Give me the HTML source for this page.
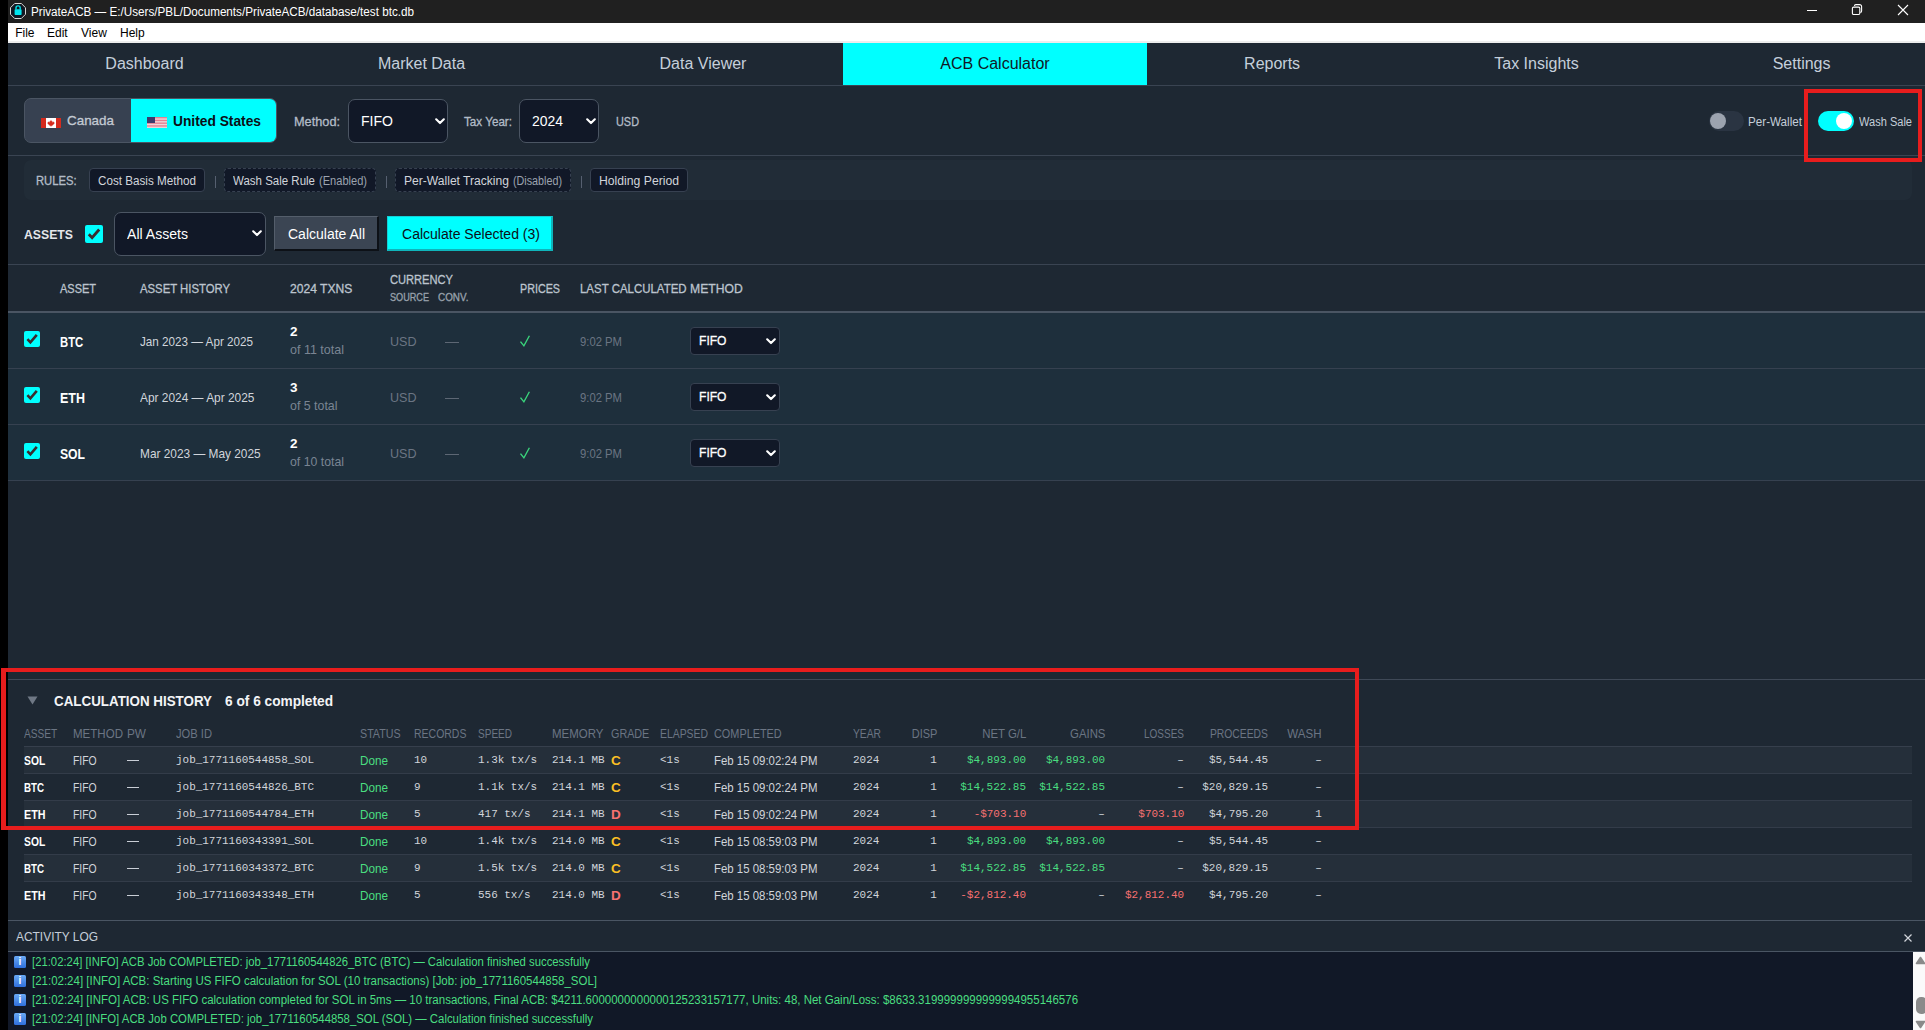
<!DOCTYPE html><html><head><meta charset="utf-8"><title>PrivateACB</title><style>
*{box-sizing:border-box;margin:0;padding:0}
html,body{width:1925px;height:1030px;overflow:hidden;background:#000;font-family:"Liberation Sans",sans-serif}
.a{position:absolute;white-space:nowrap}
.chip{position:absolute;height:24px;background:#111827;border:1px solid #374151;border-radius:4px}
.chip.d{border-style:dashed}
</style></head><body>
<div class="a" style="left:8px;top:0px;width:1917px;height:23px;background:#202020"></div>
<svg class="a" style="left:10px;top:3px" width="16" height="16" viewBox="0 0 16 16"><polygon points="4.7,0.5 11.3,0.5 15.5,4.7 15.5,11.3 11.3,15.5 4.7,15.5 0.5,11.3 0.5,4.7" fill="#0f1722" stroke="#d8d8d8" stroke-width="1"/><rect x="4.6" y="6.2" width="7" height="5.8" rx="0.8" fill="#00e5ee"/><path d="M6 6.5V5a2.1 2.1 0 0 1 4.2 0V6.5" fill="none" stroke="#00e5ee" stroke-width="1.4"/></svg>
<span class="a" style="left:31px;top:1.50px;line-height:20px;font-family:'Liberation Sans',sans-serif;font-size:12px;font-weight:normal;color:#fff;transform:scaleX(0.9733);transform-origin:left center;">PrivateACB — E:/Users/PBL/Documents/PrivateACB/database/test btc.db</span>
<div class="a" style="left:1807px;top:10px;width:10px;height:1px;background:#fff"></div>
<svg class="a" style="left:1850px;top:3px" width="14" height="14" viewBox="0 0 14 14"><rect x="2.4" y="4.1" width="7.4" height="7.4" rx="1.2" fill="none" stroke="#fff" stroke-width="1.1"/><path d="M4.5 2.9a1.3 1.3 0 0 1 1.3-1.3H9.6A2 2 0 0 1 11.6 3.6V8.1A1.3 1.3 0 0 1 10.3 9.4" fill="none" stroke="#fff" stroke-width="1.1"/></svg>
<svg class="a" style="left:1897px;top:4px" width="12" height="12" viewBox="0 0 12 12"><path d="M1 1L11 11M11 1L1 11" stroke="#fff" stroke-width="1.1"/></svg>
<div class="a" style="left:8px;top:23px;width:1917px;height:20px;background:#fff"></div>
<div class="a" style="left:8px;top:41px;width:1917px;height:2px;background:#ededed"></div>
<span class="a" style="left:15.2px;top:22.60px;line-height:20px;font-family:'Liberation Sans',sans-serif;font-size:12px;font-weight:normal;color:#000;">File</span>
<span class="a" style="left:47px;top:22.60px;line-height:20px;font-family:'Liberation Sans',sans-serif;font-size:12px;font-weight:normal;color:#000;">Edit</span>
<span class="a" style="left:81px;top:22.60px;line-height:20px;font-family:'Liberation Sans',sans-serif;font-size:12px;font-weight:normal;color:#000;">View</span>
<span class="a" style="left:120px;top:22.60px;line-height:20px;font-family:'Liberation Sans',sans-serif;font-size:12px;font-weight:normal;color:#000;">Help</span>
<div class="a" style="left:8px;top:43px;width:1917px;height:987px;background:#1e2833"></div>
<div class="a" style="left:843px;top:43px;width:304px;height:42px;background:#00ffff"></div>
<span class="a" style="left:-155.5px;width:600px;top:43px;line-height:41px;text-align:center;font-size:16px;color:#c5cfdb">Dashboard</span>
<span class="a" style="left:121.5px;width:600px;top:43px;line-height:41px;text-align:center;font-size:16px;color:#c5cfdb">Market Data</span>
<span class="a" style="left:403px;width:600px;top:43px;line-height:41px;text-align:center;font-size:16px;color:#c5cfdb">Data Viewer</span>
<span class="a" style="left:695px;width:600px;top:43px;line-height:41px;text-align:center;font-size:16px;color:#101826">ACB Calculator</span>
<span class="a" style="left:972.0999999999999px;width:600px;top:43px;line-height:41px;text-align:center;font-size:16px;color:#c5cfdb">Reports</span>
<span class="a" style="left:1236.5px;width:600px;top:43px;line-height:41px;text-align:center;font-size:16px;color:#c5cfdb">Tax Insights</span>
<span class="a" style="left:1501.6px;width:600px;top:43px;line-height:41px;text-align:center;font-size:16px;color:#c5cfdb">Settings</span>
<div class="a" style="left:8px;top:85px;width:1917px;height:1px;background:#3a4452"></div>
<div class="a" style="left:24px;top:98px;width:253px;height:45px;border:1px solid #4b5563;border-radius:7px;background:#374151;overflow:hidden"></div>
<div class="a" style="left:131px;top:99px;width:145px;height:43px;background:#00ffff;border-radius:0 6px 6px 0"></div>
<svg class="a" style="left:41px;top:118px" width="20" height="10" viewBox="0 0 20 10"><rect width="20" height="10" fill="#fff"/><rect width="5" height="10" fill="#d52b1e"/><rect x="15" width="5" height="10" fill="#d52b1e"/><path d="M10 1.8L10.7 3.2 11.5 2.9 11.2 4.6 12.6 3.6 13 4.4 13.6 4.3 13.2 5.4 13.6 5.7 11.3 7.3 11.5 7.9 10.2 7.7V9H9.8V7.7L8.5 7.9 8.7 7.3 6.4 5.7 6.8 5.4 6.4 4.3 7 4.4 7.4 3.6 8.8 4.6 8.5 2.9 9.3 3.2Z" fill="#d52b1e"/></svg>
<span class="a" style="left:67px;top:111.10px;line-height:20px;font-family:'Liberation Sans',sans-serif;font-size:13.5px;font-weight:normal;color:#c3cad3;transform:scaleX(0.9938);transform-origin:left center;-webkit-text-stroke:0.3px #c3cad3;">Canada</span>
<svg class="a" style="left:147px;top:117px" width="20" height="11" viewBox="0 0 20 11"><rect width="20" height="11" fill="#f2f2f2"/><rect y="0.00" width="20" height="0.79" fill="#e0637a"/><rect y="1.57" width="20" height="0.79" fill="#e0637a"/><rect y="3.14" width="20" height="0.79" fill="#e0637a"/><rect y="4.71" width="20" height="0.79" fill="#e0637a"/><rect y="6.29" width="20" height="0.79" fill="#e0637a"/><rect y="7.86" width="20" height="0.79" fill="#e0637a"/><rect y="9.43" width="20" height="0.79" fill="#e0637a"/><rect width="8" height="6" fill="#3c3b6e"/></svg>
<span class="a" style="left:173px;top:111.10px;line-height:20px;font-family:'Liberation Sans',sans-serif;font-size:14px;font-weight:bold;color:#0b0f17;transform:scaleX(0.9836);transform-origin:left center;">United States</span>
<span class="a" style="left:294px;top:112.00px;line-height:20px;font-family:'Liberation Sans',sans-serif;font-size:12.5px;font-weight:normal;color:#b3bcc7;transform:scaleX(1.0184);transform-origin:left center;-webkit-text-stroke:0.3px #b3bcc7;">Method:</span>
<div class="a" style="left:348px;top:99px;width:100px;height:44px;background:#111827;border:1px solid #4b5563;border-radius:7px"></div>
<span class="a" style="left:361px;top:111.30px;line-height:20px;font-family:'Liberation Sans',sans-serif;font-size:14px;font-weight:normal;color:#fff;transform:scaleX(1.0037);transform-origin:left center;">FIFO</span>
<svg class="a" style="left:434.5px;top:117.5px" width="10" height="7" viewBox="0 0 10 7"><path d="M1.2 1.3L5 5.1 8.8 1.3" fill="none" stroke="#fff" stroke-width="2.1" stroke-linecap="round" stroke-linejoin="round"/></svg>
<span class="a" style="left:464px;top:112.00px;line-height:20px;font-family:'Liberation Sans',sans-serif;font-size:12.5px;font-weight:normal;color:#b3bcc7;transform:scaleX(0.9333);transform-origin:left center;-webkit-text-stroke:0.3px #b3bcc7;">Tax Year:</span>
<div class="a" style="left:519px;top:99px;width:80px;height:44px;background:#111827;border:1px solid #4b5563;border-radius:7px"></div>
<span class="a" style="left:532px;top:111.30px;line-height:20px;font-family:'Liberation Sans',sans-serif;font-size:14px;font-weight:normal;color:#fff;transform:scaleX(0.9953);transform-origin:left center;">2024</span>
<svg class="a" style="left:585.5px;top:117.5px" width="10" height="7" viewBox="0 0 10 7"><path d="M1.2 1.3L5 5.1 8.8 1.3" fill="none" stroke="#fff" stroke-width="2.1" stroke-linecap="round" stroke-linejoin="round"/></svg>
<span class="a" style="left:615.5px;top:112.00px;line-height:20px;font-family:'Liberation Sans',sans-serif;font-size:12.5px;font-weight:normal;color:#b3bcc7;transform:scaleX(0.8715);transform-origin:left center;-webkit-text-stroke:0.3px #b3bcc7;">USD</span>
<div class="a" style="left:1709px;top:111px;width:35px;height:20px;background:#2a3442;border-radius:10px"></div>
<div class="a" style="left:1710px;top:113px;width:16px;height:16px;background:#9ca3af;border-radius:50%"></div>
<span class="a" style="left:1748px;top:112.20px;line-height:20px;font-family:'Liberation Sans',sans-serif;font-size:12.5px;font-weight:normal;color:#c5ced9;transform:scaleX(0.9329);transform-origin:left center;">Per-Wallet</span>
<div class="a" style="left:1818px;top:111px;width:36px;height:20px;background:#00ffff;border-radius:10px"></div>
<div class="a" style="left:1836px;top:113px;width:16px;height:16px;background:#fff;border-radius:50%"></div>
<span class="a" style="left:1859px;top:112.20px;line-height:20px;font-family:'Liberation Sans',sans-serif;font-size:12.5px;font-weight:normal;color:#c5ced9;transform:scaleX(0.8836);transform-origin:left center;">Wash Sale</span>
<div class="a" style="left:8px;top:155px;width:1917px;height:1px;background:#3a4452"></div>
<div class="a" style="left:24px;top:160px;width:1888px;height:40px;background:#212c37;border-radius:7px"></div>
<span class="a" style="left:36px;top:171.00px;line-height:20px;font-family:'Liberation Sans',sans-serif;font-size:12px;font-weight:normal;color:#b3bcc7;transform:scaleX(0.9366);transform-origin:left center;-webkit-text-stroke:0.3px #b3bcc7;">RULES:</span>
<div class="chip" style="left:89px;top:168px;width:116px"></div>
<div class="chip d" style="left:224px;top:168px;width:152px"></div>
<div class="chip d" style="left:395px;top:168px;width:176px"></div>
<div class="chip" style="left:590px;top:168px;width:98px"></div>
<span class="a" style="left:98px;top:171.00px;line-height:20px;font-family:'Liberation Sans',sans-serif;font-size:12.5px;font-weight:normal;color:#d1d5db;transform:scaleX(0.9341);transform-origin:left center;">Cost Basis Method</span>
<span class="a" style="left:233px;top:171.00px;line-height:20px;font-family:'Liberation Sans',sans-serif;font-size:12.5px;font-weight:normal;color:#d1d5db;transform:scaleX(0.9197);transform-origin:left center;">Wash Sale Rule</span>
<span class="a" style="left:319px;top:171.00px;line-height:20px;font-family:'Liberation Sans',sans-serif;font-size:12.5px;font-weight:normal;color:#9ca3af;transform:scaleX(0.8856);transform-origin:left center;">(Enabled)</span>
<span class="a" style="left:404px;top:171.00px;line-height:20px;font-family:'Liberation Sans',sans-serif;font-size:12.5px;font-weight:normal;color:#d1d5db;transform:scaleX(0.9669);transform-origin:left center;">Per-Wallet Tracking</span>
<span class="a" style="left:513px;top:171.00px;line-height:20px;font-family:'Liberation Sans',sans-serif;font-size:12.5px;font-weight:normal;color:#9ca3af;transform:scaleX(0.8602);transform-origin:left center;">(Disabled)</span>
<span class="a" style="left:599px;top:171.00px;line-height:20px;font-family:'Liberation Sans',sans-serif;font-size:12.5px;font-weight:normal;color:#d1d5db;transform:scaleX(0.9756);transform-origin:left center;">Holding Period</span>
<div class="a" style="left:214.5px;top:176px;width:1.0px;height:12px;background:#566070"></div>
<div class="a" style="left:385.5px;top:176px;width:1.0px;height:12px;background:#566070"></div>
<div class="a" style="left:580.5px;top:176px;width:1.0px;height:12px;background:#566070"></div>
<span class="a" style="left:24px;top:225.00px;line-height:20px;font-family:'Liberation Sans',sans-serif;font-size:13.5px;font-weight:bold;color:#e5e7eb;transform:scaleX(0.9071);transform-origin:left center;">ASSETS</span>
<div class="a" style="left:85px;top:225px;width:18px;height:18px;background:#00ffff;border-radius:2px"></div>
<svg class="a" style="left:85px;top:225px" width="18" height="18" viewBox="0 0 18 18"><path d="M3.8 9.2L7.1 12.7 14.2 4.5" fill="none" stroke="#3a2c2e" stroke-width="2.8"/></svg>
<div class="a" style="left:114px;top:212px;width:152px;height:44px;background:#111827;border:1px solid #4b5563;border-radius:7px"></div>
<span class="a" style="left:127px;top:224.00px;line-height:20px;font-family:'Liberation Sans',sans-serif;font-size:14px;font-weight:normal;color:#fff;transform:scaleX(1.0051);transform-origin:left center;">All Assets</span>
<svg class="a" style="left:251.5px;top:230.3px" width="10" height="7" viewBox="0 0 10 7"><path d="M1.2 1.3L5 5.1 8.8 1.3" fill="none" stroke="#fff" stroke-width="2.1" stroke-linecap="round" stroke-linejoin="round"/></svg>
<div class="a" style="left:274px;top:216px;width:105px;height:35px;background:#3b4553;border:1px solid #545e6b;border-right:2px solid #0d1117;border-bottom:2px solid #0d1117"></div>
<span class="a" style="left:288px;top:224.00px;line-height:20px;font-family:'Liberation Sans',sans-serif;font-size:14px;font-weight:normal;color:#fff;transform:scaleX(0.9994);transform-origin:left center;">Calculate All</span>
<div class="a" style="left:387px;top:216px;width:166px;height:35px;background:#00ffff;border:1px solid #14d0d6;border-right:2px solid #0fb5bb;border-bottom:2px solid #0fb5bb"></div>
<span class="a" style="left:402px;top:224.00px;line-height:20px;font-family:'Liberation Sans',sans-serif;font-size:14px;font-weight:normal;color:#0b0f17;transform:scaleX(1.0019);transform-origin:left center;">Calculate Selected (3)</span>
<div class="a" style="left:8px;top:264px;width:1917px;height:1px;background:#3a4452"></div>
<span class="a" style="left:60px;top:278.80px;line-height:20px;font-family:'Liberation Sans',sans-serif;font-size:12.5px;font-weight:normal;color:#bcc4ce;transform:scaleX(0.8783);transform-origin:left center;-webkit-text-stroke:0.3px #bcc4ce;">ASSET</span>
<span class="a" style="left:140px;top:278.80px;line-height:20px;font-family:'Liberation Sans',sans-serif;font-size:12.5px;font-weight:normal;color:#bcc4ce;transform:scaleX(0.9059);transform-origin:left center;-webkit-text-stroke:0.3px #bcc4ce;">ASSET HISTORY</span>
<span class="a" style="left:290px;top:278.80px;line-height:20px;font-family:'Liberation Sans',sans-serif;font-size:12.5px;font-weight:normal;color:#bcc4ce;transform:scaleX(0.9690);transform-origin:left center;-webkit-text-stroke:0.3px #bcc4ce;">2024 TXNS</span>
<span class="a" style="left:390px;top:269.80px;line-height:20px;font-family:'Liberation Sans',sans-serif;font-size:12.5px;font-weight:normal;color:#bcc4ce;transform:scaleX(0.8893);transform-origin:left center;-webkit-text-stroke:0.3px #bcc4ce;">CURRENCY</span>
<span class="a" style="left:390px;top:287.60px;line-height:20px;font-family:'Liberation Sans',sans-serif;font-size:10px;font-weight:normal;color:#98a1ac;transform:scaleX(0.9115);transform-origin:left center;-webkit-text-stroke:0.3px #98a1ac;">SOURCE</span>
<span class="a" style="left:438px;top:287.60px;line-height:20px;font-family:'Liberation Sans',sans-serif;font-size:10px;font-weight:normal;color:#98a1ac;transform:scaleX(0.9885);transform-origin:left center;-webkit-text-stroke:0.3px #98a1ac;">CONV.</span>
<span class="a" style="left:520px;top:278.80px;line-height:20px;font-family:'Liberation Sans',sans-serif;font-size:12.5px;font-weight:normal;color:#bcc4ce;transform:scaleX(0.8595);transform-origin:left center;-webkit-text-stroke:0.3px #bcc4ce;">PRICES</span>
<span class="a" style="left:580px;top:278.80px;line-height:20px;font-family:'Liberation Sans',sans-serif;font-size:12.5px;font-weight:normal;color:#bcc4ce;transform:scaleX(0.9170);transform-origin:left center;-webkit-text-stroke:0.3px #bcc4ce;">LAST CALCULATED</span>
<span class="a" style="left:690px;top:278.80px;line-height:20px;font-family:'Liberation Sans',sans-serif;font-size:12.5px;font-weight:normal;color:#bcc4ce;transform:scaleX(0.9730);transform-origin:left center;-webkit-text-stroke:0.3px #bcc4ce;">METHOD</span>
<div class="a" style="left:8px;top:311px;width:1917px;height:2px;background:#4a5563"></div>
<div class="a" style="left:8px;top:313px;width:1917px;height:55px;background:#1e2f3c"></div>
<div class="a" style="left:8px;top:368px;width:1917px;height:1px;background:#364150"></div>
<div class="a" style="left:24px;top:331px;width:16px;height:16px;background:#00ffff;border-radius:2px"></div>
<svg class="a" style="left:24px;top:331px" width="16" height="16" viewBox="0 0 16 16"><path d="M3.4 8.2L6.4 11.4 12.8 3.9" fill="none" stroke="#3a2c2e" stroke-width="2.6"/></svg>
<span class="a" style="left:60px;top:331.70px;line-height:20px;font-family:'Liberation Sans',sans-serif;font-size:14px;font-weight:bold;color:#fff;transform:scaleX(0.8063);transform-origin:left center;">BTC</span>
<span class="a" style="left:140px;top:332.00px;line-height:20px;font-family:'Liberation Sans',sans-serif;font-size:13px;font-weight:normal;color:#d1d5db;transform:scaleX(0.8985);transform-origin:left center;">Jan 2023 — Apr 2025</span>
<span class="a" style="left:290px;top:321.70px;line-height:20px;font-family:'Liberation Sans',sans-serif;font-size:13.5px;font-weight:bold;color:#fff;">2</span>
<span class="a" style="left:290px;top:339.60px;line-height:20px;font-family:'Liberation Sans',sans-serif;font-size:13px;font-weight:normal;color:#7a8593;transform:scaleX(0.9620);transform-origin:left center;">of 11 total</span>
<span class="a" style="left:390px;top:332.00px;line-height:20px;font-family:'Liberation Sans',sans-serif;font-size:13.5px;font-weight:normal;color:#6b7583;transform:scaleX(0.9297);transform-origin:left center;">USD</span>
<div class="a" style="left:445px;top:342px;width:14px;height:1px;background:#5d6774"></div>
<svg class="a" style="left:519px;top:335px" width="12" height="13" viewBox="0 0 12 13"><path d="M1.5 6.6L4.9 10.9 10.4 0.8" fill="none" stroke="#3ad57c" stroke-width="1.35"/></svg>
<span class="a" style="left:580px;top:332.00px;line-height:20px;font-family:'Liberation Sans',sans-serif;font-size:13px;font-weight:normal;color:#6b7583;transform:scaleX(0.8675);transform-origin:left center;">9:02 PM</span>
<div class="a" style="left:690px;top:327px;width:90px;height:28px;background:#111827;border:1px solid #374151;border-radius:4px"></div>
<span class="a" style="left:699px;top:330.50px;line-height:20px;font-family:'Liberation Sans',sans-serif;font-size:13px;font-weight:normal;color:#fff;transform:scaleX(0.9289);transform-origin:left center;-webkit-text-stroke:0.3px #fff;">FIFO</span>
<svg class="a" style="left:766px;top:338px" width="10" height="7" viewBox="0 0 10 7"><path d="M1.2 1.3L5 5.1 8.8 1.3" fill="none" stroke="#fff" stroke-width="2.1" stroke-linecap="round" stroke-linejoin="round"/></svg>
<div class="a" style="left:8px;top:369px;width:1917px;height:55px;background:#1e2f3c"></div>
<div class="a" style="left:8px;top:424px;width:1917px;height:1px;background:#364150"></div>
<div class="a" style="left:24px;top:387px;width:16px;height:16px;background:#00ffff;border-radius:2px"></div>
<svg class="a" style="left:24px;top:387px" width="16" height="16" viewBox="0 0 16 16"><path d="M3.4 8.2L6.4 11.4 12.8 3.9" fill="none" stroke="#3a2c2e" stroke-width="2.6"/></svg>
<span class="a" style="left:60px;top:387.70px;line-height:20px;font-family:'Liberation Sans',sans-serif;font-size:14px;font-weight:bold;color:#fff;transform:scaleX(0.8928);transform-origin:left center;">ETH</span>
<span class="a" style="left:140px;top:388.00px;line-height:20px;font-family:'Liberation Sans',sans-serif;font-size:13px;font-weight:normal;color:#d1d5db;transform:scaleX(0.9150);transform-origin:left center;">Apr 2024 — Apr 2025</span>
<span class="a" style="left:290px;top:377.70px;line-height:20px;font-family:'Liberation Sans',sans-serif;font-size:13.5px;font-weight:bold;color:#fff;">3</span>
<span class="a" style="left:290px;top:395.60px;line-height:20px;font-family:'Liberation Sans',sans-serif;font-size:13px;font-weight:normal;color:#7a8593;transform:scaleX(0.9525);transform-origin:left center;">of 5 total</span>
<span class="a" style="left:390px;top:388.00px;line-height:20px;font-family:'Liberation Sans',sans-serif;font-size:13.5px;font-weight:normal;color:#6b7583;transform:scaleX(0.9297);transform-origin:left center;">USD</span>
<div class="a" style="left:445px;top:398px;width:14px;height:1px;background:#5d6774"></div>
<svg class="a" style="left:519px;top:391px" width="12" height="13" viewBox="0 0 12 13"><path d="M1.5 6.6L4.9 10.9 10.4 0.8" fill="none" stroke="#3ad57c" stroke-width="1.35"/></svg>
<span class="a" style="left:580px;top:388.00px;line-height:20px;font-family:'Liberation Sans',sans-serif;font-size:13px;font-weight:normal;color:#6b7583;transform:scaleX(0.8675);transform-origin:left center;">9:02 PM</span>
<div class="a" style="left:690px;top:383px;width:90px;height:28px;background:#111827;border:1px solid #374151;border-radius:4px"></div>
<span class="a" style="left:699px;top:386.50px;line-height:20px;font-family:'Liberation Sans',sans-serif;font-size:13px;font-weight:normal;color:#fff;transform:scaleX(0.9289);transform-origin:left center;-webkit-text-stroke:0.3px #fff;">FIFO</span>
<svg class="a" style="left:766px;top:394px" width="10" height="7" viewBox="0 0 10 7"><path d="M1.2 1.3L5 5.1 8.8 1.3" fill="none" stroke="#fff" stroke-width="2.1" stroke-linecap="round" stroke-linejoin="round"/></svg>
<div class="a" style="left:8px;top:425px;width:1917px;height:55px;background:#1e2f3c"></div>
<div class="a" style="left:8px;top:480px;width:1917px;height:1px;background:#364150"></div>
<div class="a" style="left:24px;top:443px;width:16px;height:16px;background:#00ffff;border-radius:2px"></div>
<svg class="a" style="left:24px;top:443px" width="16" height="16" viewBox="0 0 16 16"><path d="M3.4 8.2L6.4 11.4 12.8 3.9" fill="none" stroke="#3a2c2e" stroke-width="2.6"/></svg>
<span class="a" style="left:60px;top:443.70px;line-height:20px;font-family:'Liberation Sans',sans-serif;font-size:14px;font-weight:bold;color:#fff;transform:scaleX(0.8687);transform-origin:left center;">SOL</span>
<span class="a" style="left:140px;top:444.00px;line-height:20px;font-family:'Liberation Sans',sans-serif;font-size:13px;font-weight:normal;color:#d1d5db;transform:scaleX(0.9120);transform-origin:left center;">Mar 2023 — May 2025</span>
<span class="a" style="left:290px;top:433.70px;line-height:20px;font-family:'Liberation Sans',sans-serif;font-size:13.5px;font-weight:bold;color:#fff;">2</span>
<span class="a" style="left:290px;top:451.60px;line-height:20px;font-family:'Liberation Sans',sans-serif;font-size:13px;font-weight:normal;color:#7a8593;transform:scaleX(0.9458);transform-origin:left center;">of 10 total</span>
<span class="a" style="left:390px;top:444.00px;line-height:20px;font-family:'Liberation Sans',sans-serif;font-size:13.5px;font-weight:normal;color:#6b7583;transform:scaleX(0.9297);transform-origin:left center;">USD</span>
<div class="a" style="left:445px;top:454px;width:14px;height:1px;background:#5d6774"></div>
<svg class="a" style="left:519px;top:447px" width="12" height="13" viewBox="0 0 12 13"><path d="M1.5 6.6L4.9 10.9 10.4 0.8" fill="none" stroke="#3ad57c" stroke-width="1.35"/></svg>
<span class="a" style="left:580px;top:444.00px;line-height:20px;font-family:'Liberation Sans',sans-serif;font-size:13px;font-weight:normal;color:#6b7583;transform:scaleX(0.8675);transform-origin:left center;">9:02 PM</span>
<div class="a" style="left:690px;top:439px;width:90px;height:28px;background:#111827;border:1px solid #374151;border-radius:4px"></div>
<span class="a" style="left:699px;top:442.50px;line-height:20px;font-family:'Liberation Sans',sans-serif;font-size:13px;font-weight:normal;color:#fff;transform:scaleX(0.9289);transform-origin:left center;-webkit-text-stroke:0.3px #fff;">FIFO</span>
<svg class="a" style="left:766px;top:450px" width="10" height="7" viewBox="0 0 10 7"><path d="M1.2 1.3L5 5.1 8.8 1.3" fill="none" stroke="#fff" stroke-width="2.1" stroke-linecap="round" stroke-linejoin="round"/></svg>
<div class="a" style="left:8px;top:679px;width:1917px;height:1px;background:#3f4957"></div>
<svg class="a" style="left:27px;top:696px" width="11" height="9" viewBox="0 0 11 9"><path d="M0.5 0.5H10.5L5.5 8.5Z" fill="#6f7885"/></svg>
<span class="a" style="left:54px;top:691.30px;line-height:20px;font-family:'Liberation Sans',sans-serif;font-size:14px;font-weight:bold;color:#f3f4f6;transform:scaleX(0.9552);transform-origin:left center;">CALCULATION HISTORY</span>
<span class="a" style="left:225px;top:691.30px;line-height:20px;font-family:'Liberation Sans',sans-serif;font-size:14px;font-weight:bold;color:#f3f4f6;transform:scaleX(0.9776);transform-origin:left center;">6 of 6 completed</span>
<span class="a" style="left:24.3px;top:723.50px;line-height:20px;font-family:'Liberation Sans',sans-serif;font-size:13px;font-weight:normal;color:#6b7583;transform:scaleX(0.7812);transform-origin:left center;">ASSET</span>
<span class="a" style="left:73.3px;top:723.50px;line-height:20px;font-family:'Liberation Sans',sans-serif;font-size:13px;font-weight:normal;color:#6b7583;transform:scaleX(0.8876);transform-origin:left center;">METHOD</span>
<span class="a" style="left:127px;top:723.50px;line-height:20px;font-family:'Liberation Sans',sans-serif;font-size:13px;font-weight:normal;color:#6b7583;transform:scaleX(0.9073);transform-origin:left center;">PW</span>
<span class="a" style="left:176px;top:723.50px;line-height:20px;font-family:'Liberation Sans',sans-serif;font-size:13px;font-weight:normal;color:#6b7583;transform:scaleX(0.8593);transform-origin:left center;">JOB ID</span>
<span class="a" style="left:360.2px;top:723.50px;line-height:20px;font-family:'Liberation Sans',sans-serif;font-size:13px;font-weight:normal;color:#6b7583;transform:scaleX(0.8226);transform-origin:left center;">STATUS</span>
<span class="a" style="left:414.4px;top:723.50px;line-height:20px;font-family:'Liberation Sans',sans-serif;font-size:13px;font-weight:normal;color:#6b7583;transform:scaleX(0.8061);transform-origin:left center;">RECORDS</span>
<span class="a" style="left:478px;top:723.50px;line-height:20px;font-family:'Liberation Sans',sans-serif;font-size:13px;font-weight:normal;color:#6b7583;transform:scaleX(0.7714);transform-origin:left center;">SPEED</span>
<span class="a" style="left:552.3px;top:723.50px;line-height:20px;font-family:'Liberation Sans',sans-serif;font-size:13px;font-weight:normal;color:#6b7583;transform:scaleX(0.8821);transform-origin:left center;">MEMORY</span>
<span class="a" style="left:611.2px;top:723.50px;line-height:20px;font-family:'Liberation Sans',sans-serif;font-size:13px;font-weight:normal;color:#6b7583;transform:scaleX(0.8284);transform-origin:left center;">GRADE</span>
<span class="a" style="left:660.2px;top:723.50px;line-height:20px;font-family:'Liberation Sans',sans-serif;font-size:13px;font-weight:normal;color:#6b7583;transform:scaleX(0.8003);transform-origin:left center;">ELAPSED</span>
<span class="a" style="left:714px;top:723.50px;line-height:20px;font-family:'Liberation Sans',sans-serif;font-size:13px;font-weight:normal;color:#6b7583;transform:scaleX(0.8368);transform-origin:left center;">COMPLETED</span>
<span class="a" style="left:853.3px;top:723.50px;line-height:20px;font-family:'Liberation Sans',sans-serif;font-size:13px;font-weight:normal;color:#6b7583;transform:scaleX(0.7909);transform-origin:left center;">YEAR</span>
<span class="a" style="right:988px;top:723.50px;line-height:20px;font-family:'Liberation Sans',sans-serif;font-size:13px;font-weight:normal;color:#6b7583;transform:scaleX(0.8437);transform-origin:right center;">DISP</span>
<span class="a" style="right:899px;top:723.50px;line-height:20px;font-family:'Liberation Sans',sans-serif;font-size:13px;font-weight:normal;color:#6b7583;transform:scaleX(0.8782);transform-origin:right center;">NET G/L</span>
<span class="a" style="right:820px;top:723.50px;line-height:20px;font-family:'Liberation Sans',sans-serif;font-size:13px;font-weight:normal;color:#6b7583;transform:scaleX(0.8751);transform-origin:right center;">GAINS</span>
<span class="a" style="right:741px;top:723.50px;line-height:20px;font-family:'Liberation Sans',sans-serif;font-size:13px;font-weight:normal;color:#6b7583;transform:scaleX(0.7688);transform-origin:right center;">LOSSES</span>
<span class="a" style="right:657px;top:723.50px;line-height:20px;font-family:'Liberation Sans',sans-serif;font-size:13px;font-weight:normal;color:#6b7583;transform:scaleX(0.7949);transform-origin:right center;">PROCEEDS</span>
<span class="a" style="right:603px;top:723.50px;line-height:20px;font-family:'Liberation Sans',sans-serif;font-size:13px;font-weight:normal;color:#6b7583;transform:scaleX(0.8879);transform-origin:right center;">WASH</span>
<div class="a" style="left:24px;top:746px;width:1888px;height:1px;background:#363f4c"></div>
<div class="a" style="left:24px;top:747px;width:1888px;height:26px;background:#252f3a"></div>
<div class="a" style="left:24px;top:773px;width:1888px;height:1px;background:#333c49"></div>
<span class="a" style="left:24px;top:750.50px;line-height:20px;font-family:'Liberation Sans',sans-serif;font-size:13px;font-weight:bold;color:#fff;transform:scaleX(0.7933);transform-origin:left center;">SOL</span>
<span class="a" style="left:73px;top:750.50px;line-height:20px;font-family:'Liberation Sans',sans-serif;font-size:13px;font-weight:normal;color:#d1d5db;transform:scaleX(0.8005);transform-origin:left center;">FIFO</span>
<div class="a" style="left:127px;top:760px;width:12px;height:1px;background:#c9ced6"></div>
<span class="a" style="left:176px;top:750.20px;line-height:20px;font-family:'Liberation Mono',monospace;font-size:11.5px;font-weight:normal;color:#d1d5db;transform:scaleX(0.9522);transform-origin:left center;">job_1771160544858_SOL</span>
<span class="a" style="left:360.3px;top:750.50px;line-height:20px;font-family:'Liberation Sans',sans-serif;font-size:13px;font-weight:normal;color:#4ade80;transform:scaleX(0.9009);transform-origin:left center;">Done</span>
<span class="a" style="left:414px;top:750.20px;line-height:20px;font-family:'Liberation Mono',monospace;font-size:11.5px;font-weight:normal;color:#d1d5db;transform:scaleX(0.9522);transform-origin:left center;">10</span>
<span class="a" style="left:478px;top:750.20px;line-height:20px;font-family:'Liberation Mono',monospace;font-size:11.5px;font-weight:normal;color:#d1d5db;transform:scaleX(0.9522);transform-origin:left center;">1.3k tx/s</span>
<span class="a" style="left:552px;top:750.20px;line-height:20px;font-family:'Liberation Mono',monospace;font-size:11.5px;font-weight:normal;color:#d1d5db;transform:scaleX(0.9522);transform-origin:left center;">214.1 MB</span>
<span class="a" style="left:611px;top:751.00px;line-height:20px;font-family:'Liberation Sans',sans-serif;font-size:13.5px;font-weight:bold;color:#fbbf24;">C</span>
<span class="a" style="left:660px;top:750.20px;line-height:20px;font-family:'Liberation Mono',monospace;font-size:11.5px;font-weight:normal;color:#d1d5db;transform:scaleX(0.9522);transform-origin:left center;">&lt;1s</span>
<span class="a" style="left:714px;top:750.50px;line-height:20px;font-family:'Liberation Sans',sans-serif;font-size:13px;font-weight:normal;color:#d1d5db;transform:scaleX(0.8777);transform-origin:left center;">Feb 15 09:02:24 PM</span>
<span class="a" style="left:853px;top:750.20px;line-height:20px;font-family:'Liberation Mono',monospace;font-size:11.5px;font-weight:normal;color:#d1d5db;transform:scaleX(0.9522);transform-origin:left center;">2024</span>
<span class="a" style="right:988px;top:750.20px;line-height:20px;font-family:'Liberation Mono',monospace;font-size:11.5px;font-weight:normal;color:#d1d5db;transform:scaleX(0.9522);transform-origin:right center;">1</span>
<span class="a" style="right:899px;top:750.20px;line-height:20px;font-family:'Liberation Mono',monospace;font-size:11.5px;font-weight:normal;color:#4ade80;transform:scaleX(0.9522);transform-origin:right center;">$4,893.00</span>
<span class="a" style="right:820px;top:750.20px;line-height:20px;font-family:'Liberation Mono',monospace;font-size:11.5px;font-weight:normal;color:#4ade80;transform:scaleX(0.9522);transform-origin:right center;">$4,893.00</span>
<span class="a" style="right:741px;top:750.20px;line-height:20px;font-family:'Liberation Mono',monospace;font-size:11.5px;font-weight:normal;color:#d1d5db;transform:scaleX(0.9522);transform-origin:right center;">–</span>
<span class="a" style="right:657px;top:750.20px;line-height:20px;font-family:'Liberation Mono',monospace;font-size:11.5px;font-weight:normal;color:#d1d5db;transform:scaleX(0.9522);transform-origin:right center;">$5,544.45</span>
<span class="a" style="right:603px;top:750.20px;line-height:20px;font-family:'Liberation Mono',monospace;font-size:11.5px;font-weight:normal;color:#d1d5db;transform:scaleX(0.9522);transform-origin:right center;">–</span>
<div class="a" style="left:24px;top:800px;width:1888px;height:1px;background:#333c49"></div>
<span class="a" style="left:24px;top:777.50px;line-height:20px;font-family:'Liberation Sans',sans-serif;font-size:13px;font-weight:bold;color:#fff;transform:scaleX(0.7486);transform-origin:left center;">BTC</span>
<span class="a" style="left:73px;top:777.50px;line-height:20px;font-family:'Liberation Sans',sans-serif;font-size:13px;font-weight:normal;color:#d1d5db;transform:scaleX(0.8005);transform-origin:left center;">FIFO</span>
<div class="a" style="left:127px;top:787px;width:12px;height:1px;background:#c9ced6"></div>
<span class="a" style="left:176px;top:777.20px;line-height:20px;font-family:'Liberation Mono',monospace;font-size:11.5px;font-weight:normal;color:#d1d5db;transform:scaleX(0.9522);transform-origin:left center;">job_1771160544826_BTC</span>
<span class="a" style="left:360.3px;top:777.50px;line-height:20px;font-family:'Liberation Sans',sans-serif;font-size:13px;font-weight:normal;color:#4ade80;transform:scaleX(0.9009);transform-origin:left center;">Done</span>
<span class="a" style="left:414px;top:777.20px;line-height:20px;font-family:'Liberation Mono',monospace;font-size:11.5px;font-weight:normal;color:#d1d5db;transform:scaleX(0.9522);transform-origin:left center;">9</span>
<span class="a" style="left:478px;top:777.20px;line-height:20px;font-family:'Liberation Mono',monospace;font-size:11.5px;font-weight:normal;color:#d1d5db;transform:scaleX(0.9522);transform-origin:left center;">1.1k tx/s</span>
<span class="a" style="left:552px;top:777.20px;line-height:20px;font-family:'Liberation Mono',monospace;font-size:11.5px;font-weight:normal;color:#d1d5db;transform:scaleX(0.9522);transform-origin:left center;">214.1 MB</span>
<span class="a" style="left:611px;top:778.00px;line-height:20px;font-family:'Liberation Sans',sans-serif;font-size:13.5px;font-weight:bold;color:#fbbf24;">C</span>
<span class="a" style="left:660px;top:777.20px;line-height:20px;font-family:'Liberation Mono',monospace;font-size:11.5px;font-weight:normal;color:#d1d5db;transform:scaleX(0.9522);transform-origin:left center;">&lt;1s</span>
<span class="a" style="left:714px;top:777.50px;line-height:20px;font-family:'Liberation Sans',sans-serif;font-size:13px;font-weight:normal;color:#d1d5db;transform:scaleX(0.8777);transform-origin:left center;">Feb 15 09:02:24 PM</span>
<span class="a" style="left:853px;top:777.20px;line-height:20px;font-family:'Liberation Mono',monospace;font-size:11.5px;font-weight:normal;color:#d1d5db;transform:scaleX(0.9522);transform-origin:left center;">2024</span>
<span class="a" style="right:988px;top:777.20px;line-height:20px;font-family:'Liberation Mono',monospace;font-size:11.5px;font-weight:normal;color:#d1d5db;transform:scaleX(0.9522);transform-origin:right center;">1</span>
<span class="a" style="right:899px;top:777.20px;line-height:20px;font-family:'Liberation Mono',monospace;font-size:11.5px;font-weight:normal;color:#4ade80;transform:scaleX(0.9522);transform-origin:right center;">$14,522.85</span>
<span class="a" style="right:820px;top:777.20px;line-height:20px;font-family:'Liberation Mono',monospace;font-size:11.5px;font-weight:normal;color:#4ade80;transform:scaleX(0.9522);transform-origin:right center;">$14,522.85</span>
<span class="a" style="right:741px;top:777.20px;line-height:20px;font-family:'Liberation Mono',monospace;font-size:11.5px;font-weight:normal;color:#d1d5db;transform:scaleX(0.9522);transform-origin:right center;">–</span>
<span class="a" style="right:657px;top:777.20px;line-height:20px;font-family:'Liberation Mono',monospace;font-size:11.5px;font-weight:normal;color:#d1d5db;transform:scaleX(0.9522);transform-origin:right center;">$20,829.15</span>
<span class="a" style="right:603px;top:777.20px;line-height:20px;font-family:'Liberation Mono',monospace;font-size:11.5px;font-weight:normal;color:#d1d5db;transform:scaleX(0.9522);transform-origin:right center;">–</span>
<div class="a" style="left:24px;top:801px;width:1888px;height:26px;background:#252f3a"></div>
<div class="a" style="left:24px;top:827px;width:1888px;height:1px;background:#333c49"></div>
<span class="a" style="left:24px;top:804.50px;line-height:20px;font-family:'Liberation Sans',sans-serif;font-size:13px;font-weight:bold;color:#fff;transform:scaleX(0.8230);transform-origin:left center;">ETH</span>
<span class="a" style="left:73px;top:804.50px;line-height:20px;font-family:'Liberation Sans',sans-serif;font-size:13px;font-weight:normal;color:#d1d5db;transform:scaleX(0.8005);transform-origin:left center;">FIFO</span>
<div class="a" style="left:127px;top:814px;width:12px;height:1px;background:#c9ced6"></div>
<span class="a" style="left:176px;top:804.20px;line-height:20px;font-family:'Liberation Mono',monospace;font-size:11.5px;font-weight:normal;color:#d1d5db;transform:scaleX(0.9522);transform-origin:left center;">job_1771160544784_ETH</span>
<span class="a" style="left:360.3px;top:804.50px;line-height:20px;font-family:'Liberation Sans',sans-serif;font-size:13px;font-weight:normal;color:#4ade80;transform:scaleX(0.9009);transform-origin:left center;">Done</span>
<span class="a" style="left:414px;top:804.20px;line-height:20px;font-family:'Liberation Mono',monospace;font-size:11.5px;font-weight:normal;color:#d1d5db;transform:scaleX(0.9522);transform-origin:left center;">5</span>
<span class="a" style="left:478px;top:804.20px;line-height:20px;font-family:'Liberation Mono',monospace;font-size:11.5px;font-weight:normal;color:#d1d5db;transform:scaleX(0.9522);transform-origin:left center;">417 tx/s</span>
<span class="a" style="left:552px;top:804.20px;line-height:20px;font-family:'Liberation Mono',monospace;font-size:11.5px;font-weight:normal;color:#d1d5db;transform:scaleX(0.9522);transform-origin:left center;">214.1 MB</span>
<span class="a" style="left:611px;top:805.00px;line-height:20px;font-family:'Liberation Sans',sans-serif;font-size:13.5px;font-weight:bold;color:#f87171;">D</span>
<span class="a" style="left:660px;top:804.20px;line-height:20px;font-family:'Liberation Mono',monospace;font-size:11.5px;font-weight:normal;color:#d1d5db;transform:scaleX(0.9522);transform-origin:left center;">&lt;1s</span>
<span class="a" style="left:714px;top:804.50px;line-height:20px;font-family:'Liberation Sans',sans-serif;font-size:13px;font-weight:normal;color:#d1d5db;transform:scaleX(0.8777);transform-origin:left center;">Feb 15 09:02:24 PM</span>
<span class="a" style="left:853px;top:804.20px;line-height:20px;font-family:'Liberation Mono',monospace;font-size:11.5px;font-weight:normal;color:#d1d5db;transform:scaleX(0.9522);transform-origin:left center;">2024</span>
<span class="a" style="right:988px;top:804.20px;line-height:20px;font-family:'Liberation Mono',monospace;font-size:11.5px;font-weight:normal;color:#d1d5db;transform:scaleX(0.9522);transform-origin:right center;">1</span>
<span class="a" style="right:899px;top:804.20px;line-height:20px;font-family:'Liberation Mono',monospace;font-size:11.5px;font-weight:normal;color:#f87171;transform:scaleX(0.9522);transform-origin:right center;">-$703.10</span>
<span class="a" style="right:820px;top:804.20px;line-height:20px;font-family:'Liberation Mono',monospace;font-size:11.5px;font-weight:normal;color:#d1d5db;transform:scaleX(0.9522);transform-origin:right center;">–</span>
<span class="a" style="right:741px;top:804.20px;line-height:20px;font-family:'Liberation Mono',monospace;font-size:11.5px;font-weight:normal;color:#f87171;transform:scaleX(0.9522);transform-origin:right center;">$703.10</span>
<span class="a" style="right:657px;top:804.20px;line-height:20px;font-family:'Liberation Mono',monospace;font-size:11.5px;font-weight:normal;color:#d1d5db;transform:scaleX(0.9522);transform-origin:right center;">$4,795.20</span>
<span class="a" style="right:603px;top:804.20px;line-height:20px;font-family:'Liberation Mono',monospace;font-size:11.5px;font-weight:normal;color:#d1d5db;transform:scaleX(0.9522);transform-origin:right center;">1</span>
<div class="a" style="left:24px;top:854px;width:1888px;height:1px;background:#333c49"></div>
<span class="a" style="left:24px;top:831.50px;line-height:20px;font-family:'Liberation Sans',sans-serif;font-size:13px;font-weight:bold;color:#fff;transform:scaleX(0.7933);transform-origin:left center;">SOL</span>
<span class="a" style="left:73px;top:831.50px;line-height:20px;font-family:'Liberation Sans',sans-serif;font-size:13px;font-weight:normal;color:#d1d5db;transform:scaleX(0.8005);transform-origin:left center;">FIFO</span>
<div class="a" style="left:127px;top:841px;width:12px;height:1px;background:#c9ced6"></div>
<span class="a" style="left:176px;top:831.20px;line-height:20px;font-family:'Liberation Mono',monospace;font-size:11.5px;font-weight:normal;color:#d1d5db;transform:scaleX(0.9522);transform-origin:left center;">job_1771160343391_SOL</span>
<span class="a" style="left:360.3px;top:831.50px;line-height:20px;font-family:'Liberation Sans',sans-serif;font-size:13px;font-weight:normal;color:#4ade80;transform:scaleX(0.9009);transform-origin:left center;">Done</span>
<span class="a" style="left:414px;top:831.20px;line-height:20px;font-family:'Liberation Mono',monospace;font-size:11.5px;font-weight:normal;color:#d1d5db;transform:scaleX(0.9522);transform-origin:left center;">10</span>
<span class="a" style="left:478px;top:831.20px;line-height:20px;font-family:'Liberation Mono',monospace;font-size:11.5px;font-weight:normal;color:#d1d5db;transform:scaleX(0.9522);transform-origin:left center;">1.4k tx/s</span>
<span class="a" style="left:552px;top:831.20px;line-height:20px;font-family:'Liberation Mono',monospace;font-size:11.5px;font-weight:normal;color:#d1d5db;transform:scaleX(0.9522);transform-origin:left center;">214.0 MB</span>
<span class="a" style="left:611px;top:832.00px;line-height:20px;font-family:'Liberation Sans',sans-serif;font-size:13.5px;font-weight:bold;color:#fbbf24;">C</span>
<span class="a" style="left:660px;top:831.20px;line-height:20px;font-family:'Liberation Mono',monospace;font-size:11.5px;font-weight:normal;color:#d1d5db;transform:scaleX(0.9522);transform-origin:left center;">&lt;1s</span>
<span class="a" style="left:714px;top:831.50px;line-height:20px;font-family:'Liberation Sans',sans-serif;font-size:13px;font-weight:normal;color:#d1d5db;transform:scaleX(0.8777);transform-origin:left center;">Feb 15 08:59:03 PM</span>
<span class="a" style="left:853px;top:831.20px;line-height:20px;font-family:'Liberation Mono',monospace;font-size:11.5px;font-weight:normal;color:#d1d5db;transform:scaleX(0.9522);transform-origin:left center;">2024</span>
<span class="a" style="right:988px;top:831.20px;line-height:20px;font-family:'Liberation Mono',monospace;font-size:11.5px;font-weight:normal;color:#d1d5db;transform:scaleX(0.9522);transform-origin:right center;">1</span>
<span class="a" style="right:899px;top:831.20px;line-height:20px;font-family:'Liberation Mono',monospace;font-size:11.5px;font-weight:normal;color:#4ade80;transform:scaleX(0.9522);transform-origin:right center;">$4,893.00</span>
<span class="a" style="right:820px;top:831.20px;line-height:20px;font-family:'Liberation Mono',monospace;font-size:11.5px;font-weight:normal;color:#4ade80;transform:scaleX(0.9522);transform-origin:right center;">$4,893.00</span>
<span class="a" style="right:741px;top:831.20px;line-height:20px;font-family:'Liberation Mono',monospace;font-size:11.5px;font-weight:normal;color:#d1d5db;transform:scaleX(0.9522);transform-origin:right center;">–</span>
<span class="a" style="right:657px;top:831.20px;line-height:20px;font-family:'Liberation Mono',monospace;font-size:11.5px;font-weight:normal;color:#d1d5db;transform:scaleX(0.9522);transform-origin:right center;">$5,544.45</span>
<span class="a" style="right:603px;top:831.20px;line-height:20px;font-family:'Liberation Mono',monospace;font-size:11.5px;font-weight:normal;color:#d1d5db;transform:scaleX(0.9522);transform-origin:right center;">–</span>
<div class="a" style="left:24px;top:855px;width:1888px;height:26px;background:#252f3a"></div>
<div class="a" style="left:24px;top:881px;width:1888px;height:1px;background:#333c49"></div>
<span class="a" style="left:24px;top:858.50px;line-height:20px;font-family:'Liberation Sans',sans-serif;font-size:13px;font-weight:bold;color:#fff;transform:scaleX(0.7486);transform-origin:left center;">BTC</span>
<span class="a" style="left:73px;top:858.50px;line-height:20px;font-family:'Liberation Sans',sans-serif;font-size:13px;font-weight:normal;color:#d1d5db;transform:scaleX(0.8005);transform-origin:left center;">FIFO</span>
<div class="a" style="left:127px;top:868px;width:12px;height:1px;background:#c9ced6"></div>
<span class="a" style="left:176px;top:858.20px;line-height:20px;font-family:'Liberation Mono',monospace;font-size:11.5px;font-weight:normal;color:#d1d5db;transform:scaleX(0.9522);transform-origin:left center;">job_1771160343372_BTC</span>
<span class="a" style="left:360.3px;top:858.50px;line-height:20px;font-family:'Liberation Sans',sans-serif;font-size:13px;font-weight:normal;color:#4ade80;transform:scaleX(0.9009);transform-origin:left center;">Done</span>
<span class="a" style="left:414px;top:858.20px;line-height:20px;font-family:'Liberation Mono',monospace;font-size:11.5px;font-weight:normal;color:#d1d5db;transform:scaleX(0.9522);transform-origin:left center;">9</span>
<span class="a" style="left:478px;top:858.20px;line-height:20px;font-family:'Liberation Mono',monospace;font-size:11.5px;font-weight:normal;color:#d1d5db;transform:scaleX(0.9522);transform-origin:left center;">1.5k tx/s</span>
<span class="a" style="left:552px;top:858.20px;line-height:20px;font-family:'Liberation Mono',monospace;font-size:11.5px;font-weight:normal;color:#d1d5db;transform:scaleX(0.9522);transform-origin:left center;">214.0 MB</span>
<span class="a" style="left:611px;top:859.00px;line-height:20px;font-family:'Liberation Sans',sans-serif;font-size:13.5px;font-weight:bold;color:#fbbf24;">C</span>
<span class="a" style="left:660px;top:858.20px;line-height:20px;font-family:'Liberation Mono',monospace;font-size:11.5px;font-weight:normal;color:#d1d5db;transform:scaleX(0.9522);transform-origin:left center;">&lt;1s</span>
<span class="a" style="left:714px;top:858.50px;line-height:20px;font-family:'Liberation Sans',sans-serif;font-size:13px;font-weight:normal;color:#d1d5db;transform:scaleX(0.8777);transform-origin:left center;">Feb 15 08:59:03 PM</span>
<span class="a" style="left:853px;top:858.20px;line-height:20px;font-family:'Liberation Mono',monospace;font-size:11.5px;font-weight:normal;color:#d1d5db;transform:scaleX(0.9522);transform-origin:left center;">2024</span>
<span class="a" style="right:988px;top:858.20px;line-height:20px;font-family:'Liberation Mono',monospace;font-size:11.5px;font-weight:normal;color:#d1d5db;transform:scaleX(0.9522);transform-origin:right center;">1</span>
<span class="a" style="right:899px;top:858.20px;line-height:20px;font-family:'Liberation Mono',monospace;font-size:11.5px;font-weight:normal;color:#4ade80;transform:scaleX(0.9522);transform-origin:right center;">$14,522.85</span>
<span class="a" style="right:820px;top:858.20px;line-height:20px;font-family:'Liberation Mono',monospace;font-size:11.5px;font-weight:normal;color:#4ade80;transform:scaleX(0.9522);transform-origin:right center;">$14,522.85</span>
<span class="a" style="right:741px;top:858.20px;line-height:20px;font-family:'Liberation Mono',monospace;font-size:11.5px;font-weight:normal;color:#d1d5db;transform:scaleX(0.9522);transform-origin:right center;">–</span>
<span class="a" style="right:657px;top:858.20px;line-height:20px;font-family:'Liberation Mono',monospace;font-size:11.5px;font-weight:normal;color:#d1d5db;transform:scaleX(0.9522);transform-origin:right center;">$20,829.15</span>
<span class="a" style="right:603px;top:858.20px;line-height:20px;font-family:'Liberation Mono',monospace;font-size:11.5px;font-weight:normal;color:#d1d5db;transform:scaleX(0.9522);transform-origin:right center;">–</span>
<span class="a" style="left:24px;top:885.50px;line-height:20px;font-family:'Liberation Sans',sans-serif;font-size:13px;font-weight:bold;color:#fff;transform:scaleX(0.8230);transform-origin:left center;">ETH</span>
<span class="a" style="left:73px;top:885.50px;line-height:20px;font-family:'Liberation Sans',sans-serif;font-size:13px;font-weight:normal;color:#d1d5db;transform:scaleX(0.8005);transform-origin:left center;">FIFO</span>
<div class="a" style="left:127px;top:895px;width:12px;height:1px;background:#c9ced6"></div>
<span class="a" style="left:176px;top:885.20px;line-height:20px;font-family:'Liberation Mono',monospace;font-size:11.5px;font-weight:normal;color:#d1d5db;transform:scaleX(0.9522);transform-origin:left center;">job_1771160343348_ETH</span>
<span class="a" style="left:360.3px;top:885.50px;line-height:20px;font-family:'Liberation Sans',sans-serif;font-size:13px;font-weight:normal;color:#4ade80;transform:scaleX(0.9009);transform-origin:left center;">Done</span>
<span class="a" style="left:414px;top:885.20px;line-height:20px;font-family:'Liberation Mono',monospace;font-size:11.5px;font-weight:normal;color:#d1d5db;transform:scaleX(0.9522);transform-origin:left center;">5</span>
<span class="a" style="left:478px;top:885.20px;line-height:20px;font-family:'Liberation Mono',monospace;font-size:11.5px;font-weight:normal;color:#d1d5db;transform:scaleX(0.9522);transform-origin:left center;">556 tx/s</span>
<span class="a" style="left:552px;top:885.20px;line-height:20px;font-family:'Liberation Mono',monospace;font-size:11.5px;font-weight:normal;color:#d1d5db;transform:scaleX(0.9522);transform-origin:left center;">214.0 MB</span>
<span class="a" style="left:611px;top:886.00px;line-height:20px;font-family:'Liberation Sans',sans-serif;font-size:13.5px;font-weight:bold;color:#f87171;">D</span>
<span class="a" style="left:660px;top:885.20px;line-height:20px;font-family:'Liberation Mono',monospace;font-size:11.5px;font-weight:normal;color:#d1d5db;transform:scaleX(0.9522);transform-origin:left center;">&lt;1s</span>
<span class="a" style="left:714px;top:885.50px;line-height:20px;font-family:'Liberation Sans',sans-serif;font-size:13px;font-weight:normal;color:#d1d5db;transform:scaleX(0.8777);transform-origin:left center;">Feb 15 08:59:03 PM</span>
<span class="a" style="left:853px;top:885.20px;line-height:20px;font-family:'Liberation Mono',monospace;font-size:11.5px;font-weight:normal;color:#d1d5db;transform:scaleX(0.9522);transform-origin:left center;">2024</span>
<span class="a" style="right:988px;top:885.20px;line-height:20px;font-family:'Liberation Mono',monospace;font-size:11.5px;font-weight:normal;color:#d1d5db;transform:scaleX(0.9522);transform-origin:right center;">1</span>
<span class="a" style="right:899px;top:885.20px;line-height:20px;font-family:'Liberation Mono',monospace;font-size:11.5px;font-weight:normal;color:#f87171;transform:scaleX(0.9522);transform-origin:right center;">-$2,812.40</span>
<span class="a" style="right:820px;top:885.20px;line-height:20px;font-family:'Liberation Mono',monospace;font-size:11.5px;font-weight:normal;color:#d1d5db;transform:scaleX(0.9522);transform-origin:right center;">–</span>
<span class="a" style="right:741px;top:885.20px;line-height:20px;font-family:'Liberation Mono',monospace;font-size:11.5px;font-weight:normal;color:#f87171;transform:scaleX(0.9522);transform-origin:right center;">$2,812.40</span>
<span class="a" style="right:657px;top:885.20px;line-height:20px;font-family:'Liberation Mono',monospace;font-size:11.5px;font-weight:normal;color:#d1d5db;transform:scaleX(0.9522);transform-origin:right center;">$4,795.20</span>
<span class="a" style="right:603px;top:885.20px;line-height:20px;font-family:'Liberation Mono',monospace;font-size:11.5px;font-weight:normal;color:#d1d5db;transform:scaleX(0.9522);transform-origin:right center;">–</span>
<div class="a" style="left:8px;top:920px;width:1917px;height:1px;background:#4a5563"></div>
<div class="a" style="left:8px;top:921px;width:1917px;height:30px;background:#1e2833"></div>
<span class="a" style="left:16px;top:927.00px;line-height:20px;font-family:'Liberation Sans',sans-serif;font-size:13px;font-weight:normal;color:#c5ced9;transform:scaleX(0.9179);transform-origin:left center;">ACTIVITY LOG</span>
<svg class="a" style="left:1904px;top:934px" width="8" height="8" viewBox="0 0 8 8"><path d="M0.5 0.5L7.5 7.5M7.5 0.5L0.5 7.5" stroke="#d1d5db" stroke-width="1.2"/></svg>
<div class="a" style="left:8px;top:951px;width:1917px;height:1px;background:#4a5563"></div>
<div class="a" style="left:8px;top:952px;width:1905px;height:78px;background:#111827"></div>
<div class="a" style="left:14px;top:956px;width:12px;height:12px;background:linear-gradient(#6aaaf5,#2f6fdc);border-radius:1.5px"></div>
<span class="a" style="left:18.6px;top:952.20px;line-height:20px;font-family:'Liberation Sans',sans-serif;font-size:10px;font-weight:bold;color:#fff;">i</span>
<span class="a" style="left:32px;top:951.80px;line-height:20px;font-family:'Liberation Sans',sans-serif;font-size:12.5px;font-weight:normal;color:#4ade80;transform:scaleX(0.9048);transform-origin:left center;">[21:02:24] [INFO] ACB Job COMPLETED: job_1771160544826_BTC (BTC) — Calculation finished successfully</span>
<div class="a" style="left:14px;top:975px;width:12px;height:12px;background:linear-gradient(#6aaaf5,#2f6fdc);border-radius:1.5px"></div>
<span class="a" style="left:18.6px;top:971.20px;line-height:20px;font-family:'Liberation Sans',sans-serif;font-size:10px;font-weight:bold;color:#fff;">i</span>
<span class="a" style="left:32px;top:970.80px;line-height:20px;font-family:'Liberation Sans',sans-serif;font-size:12.5px;font-weight:normal;color:#4ade80;transform:scaleX(0.9188);transform-origin:left center;">[21:02:24] [INFO] ACB: Starting US FIFO calculation for SOL (10 transactions) [Job: job_1771160544858_SOL]</span>
<div class="a" style="left:14px;top:994px;width:12px;height:12px;background:linear-gradient(#6aaaf5,#2f6fdc);border-radius:1.5px"></div>
<span class="a" style="left:18.6px;top:990.20px;line-height:20px;font-family:'Liberation Sans',sans-serif;font-size:10px;font-weight:bold;color:#fff;">i</span>
<span class="a" style="left:32px;top:989.80px;line-height:20px;font-family:'Liberation Sans',sans-serif;font-size:12.5px;font-weight:normal;color:#4ade80;transform:scaleX(0.9201);transform-origin:left center;">[21:02:24] [INFO] ACB: US FIFO calculation completed for SOL in 5ms — 10 transactions, Final ACB: $4211.6000000000000125233157177, Units: 48, Net Gain/Loss: $8633.3199999999999994955146576</span>
<div class="a" style="left:14px;top:1013px;width:12px;height:12px;background:linear-gradient(#6aaaf5,#2f6fdc);border-radius:1.5px"></div>
<span class="a" style="left:18.6px;top:1009.20px;line-height:20px;font-family:'Liberation Sans',sans-serif;font-size:10px;font-weight:bold;color:#fff;">i</span>
<span class="a" style="left:32px;top:1008.80px;line-height:20px;font-family:'Liberation Sans',sans-serif;font-size:12.5px;font-weight:normal;color:#4ade80;transform:scaleX(0.9103);transform-origin:left center;">[21:02:24] [INFO] ACB Job COMPLETED: job_1771160544858_SOL (SOL) — Calculation finished successfully</span>
<div class="a" style="left:1913px;top:952px;width:12px;height:78px;background:#fafafa"></div>
<svg class="a" style="left:1913px;top:952px" width="12" height="78" viewBox="0 0 12 78"><path d="M3.5 11.5L7.5 5.5 11.5 11.5Z" fill="#8a8a8a" stroke="#8a8a8a" stroke-width="1.6" stroke-linejoin="round"/><rect x="3" y="45" width="11" height="17" rx="5" fill="#8a8a8a"/><path d="M3.5 69.5L7.5 75.5 11.5 69.5Z" fill="#8a8a8a" stroke="#8a8a8a" stroke-width="1.6" stroke-linejoin="round"/></svg>
<div class="a" style="left:1px;top:668px;width:1358px;height:162px;border-style:solid;border-color:#e81d1d;border-width:4px 4px 4px 5px"></div>
<div class="a" style="left:1804px;top:89px;width:118px;height:73px;border:4px solid #e81d1d"></div>
</body></html>
